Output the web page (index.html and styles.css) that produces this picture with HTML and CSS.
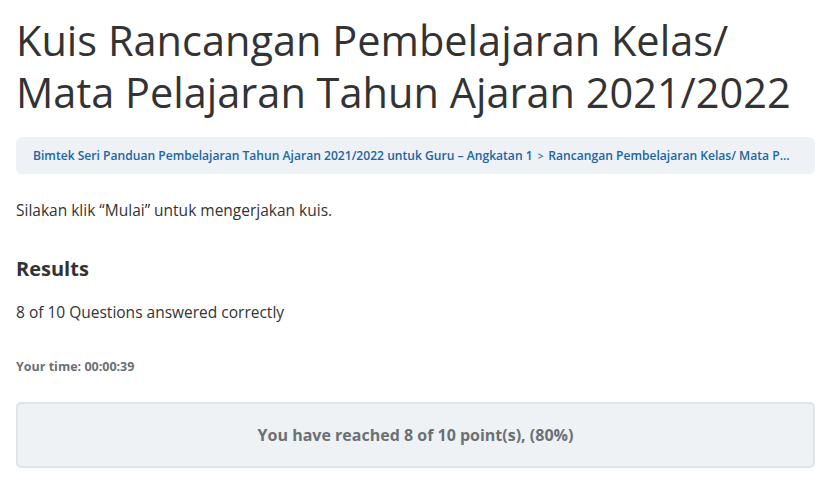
FILE: index.html
```html
<!DOCTYPE html>
<html lang="id">
<head>
<meta charset="utf-8">
<title>Kuis</title>
<link rel="stylesheet" href="styles.css">
</head>
<body>
<main class="page">
  <h1 class="title">Kuis Rancangan Pembelajaran Kelas/ Mata Pelajaran Tahun Ajaran 2021/2022</h1>
  <nav class="crumbs">
    <a href="#" class="crumb">Bimtek Seri Panduan Pembelajaran Tahun Ajaran 2021/2022 untuk Guru – Angkatan 1</a>
    <span class="sep">&gt;</span>
    <a href="#" class="crumb last">Rancangan Pembelajaran Kelas/ Mata Pelajaran Tahun Ajaran 2021/2022</a>
  </nav>
  <p class="intro">Silakan klik “Mulai” untuk mengerjakan kuis.</p>
  <h2 class="results-title">Results</h2>
  <p class="answered">8 of 10 Questions answered correctly</p>
  <p class="time">Your time: 00:00:39</p>
  <div class="points">You have reached 8 of 10 point(s), (80%)</div>
</main>
</body>
</html>
```
FILE: styles.css
```css
html, body {
  margin: 0;
  padding: 0;
  background: #ffffff;
}
body {
  font-family: "Open Sans", "Noto Sans", sans-serif;
  color: #333333;
}
.page {
  padding: 0 25px 0 16px;
  display: flex;
  flex-direction: column;
}
.title {
  margin: 14px 0 0;
  font-size: 41.5px;
  font-weight: 400;
  line-height: 52px;
  color: #333333;
}
.crumbs {
  margin-top: 19px;
  background: #eef1f5;
  border-radius: 6px;
  padding: 0 19px 0 17px;
  height: 37px;
  display: flex;
  align-items: center;
  gap: 5px;
  font-size: 12.1px;
  font-weight: 600;
  white-space: nowrap;
  overflow: hidden;
}
.crumb {
  color: #1b66a0;
  text-decoration: none;
  flex: none;
}
.crumb.last {
  flex: 1 1 auto;
  min-width: 0;
  overflow: hidden;
  text-overflow: ellipsis;
}
.sep {
  color: #1b66a0;
  font-size: 10px;
  flex: none;
}
.intro {
  margin: 26px 0 0;
  font-size: 15.5px;
  line-height: 20px;
}
.results-title {
  margin: 36px 0 0;
  font-size: 20px;
  font-weight: 700;
  line-height: 26px;
}
.answered {
  margin: 20px 0 0;
  font-size: 15.5px;
  line-height: 20px;
}
.time {
  margin: 37px 0 0;
  font-size: 12.5px;
  font-weight: 700;
  color: #6b7075;
  line-height: 16px;
}
.points {
  margin-top: 27px;
  background: #eef2f5;
  border: 2px solid #dfe4e9;
  border-radius: 5px;
  height: 62px;
  display: flex;
  align-items: center;
  justify-content: center;
  font-size: 16px;
  font-weight: 700;
  color: #6b7075;
}
```
